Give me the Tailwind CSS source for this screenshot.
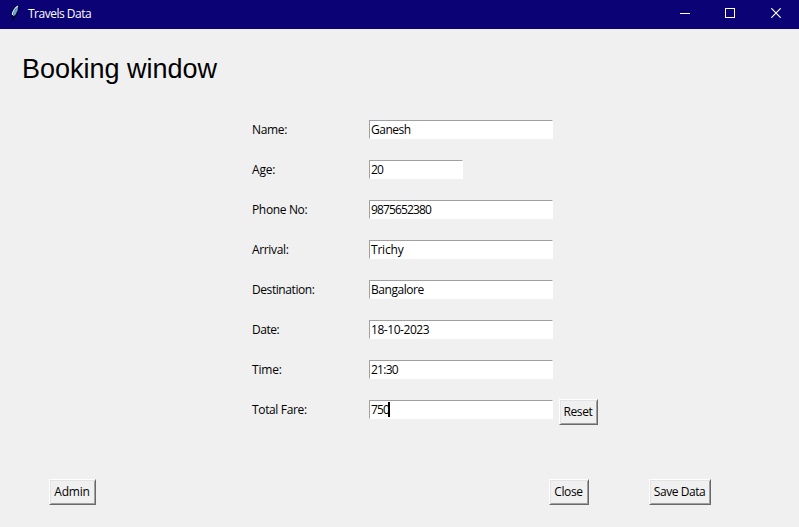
<!DOCTYPE html>
<html lang="en">
<head>
<meta charset="utf-8">
<title>Travels Data</title>
<script src="https://cdn.jsdelivr.net/npm/@tailwindcss/browser@4"></script>
</head>
<body class="flex h-screen flex-col overflow-hidden bg-[#f0f0f0] font-['Open_Sans','Noto_Sans',sans-serif] text-[12px] leading-4 tracking-[-0.35px] whitespace-nowrap text-black">
<header class="flex h-[29px] shrink-0 items-center bg-[#0a0275] pl-[6px] text-white">
  <svg class="h-[22px] w-[18px] shrink-0 -mt-[3px]" viewBox="0 0 18 22" fill="none"><path d="M5.5 14V10L7 7 9 4.5 12.5 3.2 13 5.5 12 10.5 10 14 8 15.5 7.5 18.5H6.5V15Z" fill="#00001c"/><path d="M7 14.5 7.5 10 11.8 4.2 11.8 8 9.3 13Z" fill="#6aa5dc"/><path d="M6.5 13V11L8 8 9.5 6 12 4" stroke="#d7edf8" stroke-width="1.2"/></svg>
  <span class="ml-[4px] pb-[1px] tracking-[-0.5px]">Travels Data</span>
  <div class="ml-auto flex h-full items-center pb-[3px]">
    <div class="flex w-[46px] justify-center"><svg class="h-[11px] w-[10px]" viewBox="0 0 10 11" shape-rendering="crispEdges"><path d="M0 5h10v1H0z" fill="#fff"/></svg></div>
    <div class="flex w-[44px] justify-center"><svg class="h-[10px] w-[10px]" viewBox="0 0 10 10" fill="none" stroke="#fff" shape-rendering="crispEdges"><path d="M.5.5h9v9h-9z"/></svg></div>
    <div class="ml-px flex w-[46px] justify-center"><svg class="h-[10px] w-[10px]" viewBox="0 0 10 10" fill="none" stroke="#fff" stroke-width="1.2"><path d="m.3.3 9.4 9.4m0-9.4-9.4 9.4"/></svg></div>
  </div>
</header>
<main class="flex flex-1 flex-col">
  <h1 class="mt-[22px] ml-[22px] h-[36px] font-['Liberation_Sans',sans-serif] text-[27px] leading-[36px] tracking-normal">Booking window</h1>
  <form class="mt-[33px] ml-[252px] grid auto-rows-[19px] grid-cols-[117px_190px_39px] gap-y-[21px]">
    <label class="col-start-1 pt-[2px]">Name:</label><div class="h-[19px] w-[184px] border border-t-[#a0a0a0] border-r-white border-b-white border-l-[#a0a0a0] bg-white pt-px pl-px tracking-[-0.5px]">Ganesh</div>
    <label class="col-start-1 pt-[2px] tracking-[-0.2px]">Age:</label><div class="h-[19px] w-[94px] border border-t-[#a0a0a0] border-r-white border-b-white border-l-[#a0a0a0] bg-white pt-px pl-px tracking-[-0.75px]">20</div>
    <label class="col-start-1 pt-[2px]">Phone No:</label><div class="h-[19px] w-[184px] border border-t-[#a0a0a0] border-r-white border-b-white border-l-[#a0a0a0] bg-white pt-px pl-px tracking-[-0.85px]">9875652380</div>
    <label class="col-start-1 pt-[2px]">Arrival:</label><div class="h-[19px] w-[184px] border border-t-[#a0a0a0] border-r-white border-b-white border-l-[#a0a0a0] bg-white pt-px pl-px tracking-[-0.2px]">Trichy</div>
    <label class="col-start-1 pt-[2px] tracking-[-0.42px]">Destination:</label><div class="h-[19px] w-[184px] border border-t-[#a0a0a0] border-r-white border-b-white border-l-[#a0a0a0] bg-white pt-px pl-px tracking-[-0.45px]">Bangalore</div>
    <label class="col-start-1 pt-[2px] tracking-[-0.5px]">Date:</label><div class="h-[19px] w-[184px] border border-t-[#a0a0a0] border-r-white border-b-white border-l-[#a0a0a0] bg-white pt-px pl-px tracking-[-0.45px]">18-10-2023</div>
    <label class="col-start-1 pt-[2px] tracking-[-0.2px]">Time:</label><div class="h-[19px] w-[184px] border border-t-[#a0a0a0] border-r-white border-b-white border-l-[#a0a0a0] bg-white pt-px pl-px tracking-[-0.75px]">21:30</div>
    <label class="col-start-1 pt-[2px]">Total Fare:</label><div class="flex h-[19px] w-[184px] border border-t-[#a0a0a0] border-r-white border-b-white border-l-[#a0a0a0] bg-white pt-px pl-px tracking-[-0.8px]"><span class="w-[17px]">750</span><i class="h-[15px] w-[2px] bg-black"></i></div>
    <button type="button" class="-mt-px h-[26px] w-[39px] border border-t-white border-r-[#696969] border-b-[#696969] border-l-white pr-px shadow-[inset_1px_1px_#e3e3e3,inset_-1px_-1px_#a0a0a0]">Reset</button>
  </form>
  <footer class="mt-auto mb-[22px] ml-[49px] flex h-[26px]">
    <button class="h-[26px] w-[47px] border border-t-white border-r-[#696969] border-b-[#696969] border-l-white pr-px shadow-[inset_1px_1px_#e3e3e3,inset_-1px_-1px_#a0a0a0] tracking-[-0.2px]">Admin</button>
    <button class="ml-[453px] h-[26px] w-[40px] border border-t-white border-r-[#696969] border-b-[#696969] border-l-white pr-px shadow-[inset_1px_1px_#e3e3e3,inset_-1px_-1px_#a0a0a0]">Close</button>
    <button class="ml-[60px] h-[26px] w-[62px] border border-t-white border-r-[#696969] border-b-[#696969] border-l-white pr-px shadow-[inset_1px_1px_#e3e3e3,inset_-1px_-1px_#a0a0a0] tracking-[-0.45px]">Save Data</button>
  </footer>
</main>
</body>
</html>
